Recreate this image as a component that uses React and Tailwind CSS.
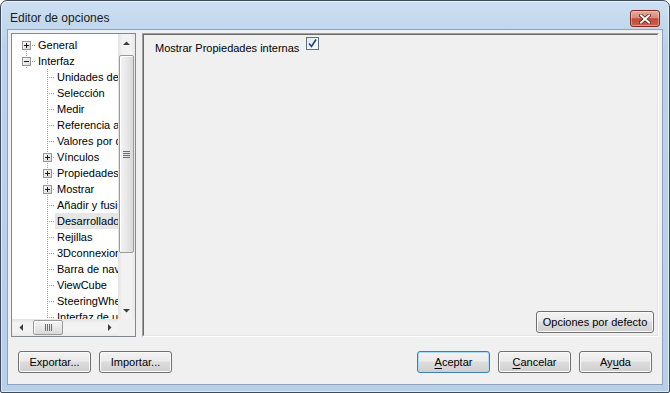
import React from 'react';

// tree rows shown in the left panel
const rows = [
    { level: 0, label: 'General', expander: 'plus', first: true },
    { level: 0, label: 'Interfaz', expander: 'minus' },
    { level: 1, label: 'Unidades de medida' },
    { level: 1, label: 'Selección' },
    { level: 1, label: 'Medir' },
    { level: 1, label: 'Referencia a objetos' },
    { level: 1, label: 'Valores por defecto' },
    { level: 1, label: 'Vínculos', expander: 'plus' },
    { level: 1, label: 'Propiedades de nodo', expander: 'plus' },
    { level: 1, label: 'Mostrar', expander: 'plus' },
    { level: 1, label: 'Añadir y fusionar' },
    { level: 1, label: 'Desarrollador', active: true },
    { level: 1, label: 'Rejillas' },
    { level: 1, label: '3Dconnexion' },
    { level: 1, label: 'Barra de navegación' },
    { level: 1, label: 'ViewCube' },
    { level: 1, label: 'SteeringWheels' },
    { level: 1, label: 'Interfaz de usuario' },
];

function Box({ cx, kind }) {
    return (
        <g>
            <rect x={cx - 4 + 0.5} y={4.5} width={8} height={8} fill="url(#expGrad)" stroke="#969696" />
            <line x1={cx - 2} x2={cx + 3} y1={8.5} y2={8.5} stroke="#1a1a1a" />
            {kind === 'plus' && <line x1={cx + 0.5} x2={cx + 0.5} y1={6} y2={11} stroke="#1a1a1a" />}
        </g>
    );
}

function Dots({ x1, y1, x2, y2 }) {
    return (
        <line
            x1={x1}
            y1={y1}
            x2={x2}
            y2={y2}
            stroke="#a0a0a0"
            strokeDasharray="1 1"
            shapeRendering="crispEdges"
        />
    );
}

function TreeRow({ row }) {
    if (row.level === 0) {
        return (
            <div className="flex h-4 items-stretch whitespace-nowrap">
                <svg width="24" height="16" className="shrink-0">
                    {!row.first && <Dots x1={14.5} y1={0} x2={14.5} y2={4} />}
                    <Dots x1={14.5} y1={14} x2={14.5} y2={16} />
                    <Box cx={14} kind={row.expander} />
                    <Dots x1={20} y1={8.5} x2={24} y2={8.5} />
                </svg>
                <span className="pl-[2px] leading-4">{row.label}</span>
            </div>
        );
    }
    return (
        <div className="flex h-4 items-stretch whitespace-nowrap">
            <svg width="43" height="16" className="shrink-0">
                {row.expander ? (
                    <>
                        <Dots x1={35.5} y1={0} x2={35.5} y2={4} />
                        <Dots x1={35.5} y1={14} x2={35.5} y2={16} />
                        <Box cx={35} kind={row.expander} />
                        <Dots x1={41} y1={8.5} x2={43} y2={8.5} />
                    </>
                ) : (
                    <>
                        <Dots x1={35.5} y1={0} x2={35.5} y2={16} />
                        <Dots x1={37} y1={8.5} x2={43} y2={8.5} />
                    </>
                )}
            </svg>
            <span className={`pl-[2px] leading-4 flex-1 ${row.active ? 'bg-[#e6e6e6]' : ''}`}>{row.label}</span>
        </div>
    );
}

function Arrow({ dir }) {
    const pts = {
        up: '0,4 7,4 3.5,0.5',
        down: '0,0 7,0 3.5,3.5',
        left: '4,0 4,7 0.5,3.5',
        right: '0,0 0,7 3.5,3.5',
    }[dir];
    const vertical = dir === 'up' || dir === 'down';
    return (
        <svg width={vertical ? 7 : 4} height={vertical ? 4 : 7}>
            <polygon points={pts} fill="#3c3c3c" />
        </svg>
    );
}

function VScrollbar() {
    return (
        <div className="flex flex-col h-full bg-[linear-gradient(90deg,#e3e3e3,#f2f2f2_25%,#f2f2f2_75%,#e9e9e9)]">
            <div className="h-[17px] flex items-center justify-center">
                <Arrow dir="up" />
            </div>
            <div className="mt-[4px] mx-[1px] h-[198px] rounded-[2px] border border-[#9a9a9a] bg-[linear-gradient(90deg,#f4f4f4,#e8e8e8_50%,#d9d9d9)] shadow-[inset_1px_1px_0_#ffffff] flex flex-col items-center justify-center gap-[1px]">
                <div className="w-[7px] h-px bg-[#6d6d6d]" />
                <div className="w-[7px] h-px bg-[#6d6d6d]" />
                <div className="w-[7px] h-px bg-[#6d6d6d]" />
                <div className="w-[7px] h-px bg-[#6d6d6d]" />
            </div>
            <div className="flex-1" />
            <div className="h-[17px] flex items-center justify-center">
                <Arrow dir="down" />
            </div>
        </div>
    );
}

function HScrollbar() {
    return (
        <div className="flex h-full bg-[linear-gradient(180deg,#e3e3e3,#f2f2f2_25%,#f2f2f2_75%,#e9e9e9)]">
            <div className="w-[17px] flex items-center justify-center">
                <Arrow dir="left" />
            </div>
            <div className="ml-[4px] my-[1px] w-[30px] rounded-[2px] border border-[#9a9a9a] bg-[linear-gradient(180deg,#f4f4f4,#e8e8e8_50%,#d9d9d9)] shadow-[inset_1px_1px_0_#ffffff] flex items-center justify-center gap-[1px]">
                <div className="h-[7px] w-px bg-[#6d6d6d]" />
                <div className="h-[7px] w-px bg-[#6d6d6d]" />
                <div className="h-[7px] w-px bg-[#6d6d6d]" />
                <div className="h-[7px] w-px bg-[#6d6d6d]" />
            </div>
            <div className="flex-1" />
            <div className="w-[17px] flex items-center justify-center">
                <Arrow dir="right" />
            </div>
        </div>
    );
}

function Button({ children, primary, className = '' }) {
    return (
        <button
            className={`h-[22px] w-[73px] rounded-[3px] border text-[11px] leading-none text-black bg-[linear-gradient(180deg,#f2f2f2_0%,#ebebeb_45%,#dddddd_50%,#cfcfcf_100%)] ${
                primary
                    ? 'border-[#3c7fb1] shadow-[inset_0_0_0_1px_#a9dbf6]'
                    : 'border-[#707070] shadow-[inset_0_0_0_1px_#fbfbfb]'
            } ${className}`}
        >
            {children}
        </button>
    );
}

export default function App() {
    return (
        <div className="w-[670px] h-[393px] font-['Liberation_Sans',Arial,sans-serif] text-[11px] text-black">
            <svg width="0" height="0" className="absolute">
                <defs>
                    <linearGradient id="expGrad" x1="0" y1="0" x2="1" y2="1">
                        <stop offset="0" stopColor="#ffffff" />
                        <stop offset="1" stopColor="#d4d4d4" />
                    </linearGradient>
                </defs>
            </svg>

            {/* window frame */}
            <div className="w-full h-full flex flex-col rounded-t-[7px] rounded-b-[2px] border border-[#3d4c5c] bg-[linear-gradient(180deg,#cddff2_0%,#bad2ea_12%,#b7cfe9_100%)] shadow-[inset_0_0_0_1px_rgba(255,255,255,0.55)]">
                {/* title bar */}
                <div className="h-[28px] flex items-start justify-between">
                    <span className="pl-[9px] pt-[10px] text-[12px] leading-[15px] text-[#1b1b1b]">Editor de opciones</span>
                    <div className="mt-[9px] mr-[9px] w-[30px] h-[17px] rounded-[3px] border border-[#7e2c20] bg-[linear-gradient(180deg,#e8a99b_0%,#d98a7a_45%,#c44a35_52%,#c9614d_100%)] shadow-[inset_0_0_0_1px_rgba(255,220,210,0.45)] flex items-center justify-center">
                        <svg width="12" height="10" viewBox="0 0 12 10">
                            <path d="M2 1.5 L10 8.5 M10 1.5 L2 8.5" stroke="#5a1c12" strokeWidth="3.6" strokeLinecap="square" />
                            <path d="M2 1.5 L10 8.5 M10 1.5 L2 8.5" stroke="#ffffff" strokeWidth="2" strokeLinecap="square" />
                        </svg>
                    </div>
                </div>

                {/* client area */}
                <div className="mx-[6px] mb-[7px] flex-1 border border-[#8ea3bb] bg-[#f0f0f0] flex flex-col">
                    <div className="pt-[3px] px-[3px] flex gap-[6px]">
                        {/* tree */}
                        <div className="w-[125px] h-[304px] border border-[#828790] bg-white grid grid-cols-[106px_17px] grid-rows-[285px_17px]">
                            <div className="overflow-hidden pt-[3px]">
                                {rows.map((r) => (
                                    <TreeRow key={r.label} row={r} />
                                ))}
                            </div>
                            <VScrollbar />
                            <HScrollbar />
                            <div className="bg-[#f0f0f0]" />
                        </div>

                        {/* option page */}
                        <div className="flex-1 h-[304px] border border-[#a0a0a0] border-r-white border-b-white">
                            <div className="h-full border border-[#696969] border-r-[#e3e3e3] border-b-[#e3e3e3] flex flex-col">
                                <div className="flex items-start pl-[11px] pt-[2px]">
                                    <span className="mt-[5px] leading-[13px]">Mostrar Propiedades internas</span>
                                    <div className="ml-[7px] w-[13px] h-[13px] border border-[#5b6f8e] bg-[linear-gradient(135deg,#dfe6ef,#ffffff)] flex items-center justify-center">
                                        <svg width="9" height="9" viewBox="0 0 9 9">
                                            <path d="M1 4.5 L3.5 7.5 L8 0.5" fill="none" stroke="#1f3f86" strokeWidth="1.6" />
                                        </svg>
                                    </div>
                                </div>
                                <div className="flex-1" />
                                <div className="flex justify-end pr-[3px] pb-[2px]">
                                    <Button className="w-[118px] h-[21px]">Opciones por defecto</Button>
                                </div>
                            </div>
                        </div>
                    </div>

                    {/* footer */}
                    <div className="mt-[14px] px-[10px] flex justify-between">
                        <div className="flex gap-[8px]">
                            <Button>Exportar...</Button>
                            <Button>Importar...</Button>
                        </div>
                        <div className="flex gap-[8px]">
                            <Button primary>
                                <span className="underline underline-offset-2">A</span>ceptar
                            </Button>
                            <Button>
                                <span className="underline underline-offset-2">C</span>ancelar
                            </Button>
                            <Button>
                                Ay<span className="underline underline-offset-2">u</span>da
                            </Button>
                        </div>
                    </div>
                </div>
            </div>
        </div>
    );
}
